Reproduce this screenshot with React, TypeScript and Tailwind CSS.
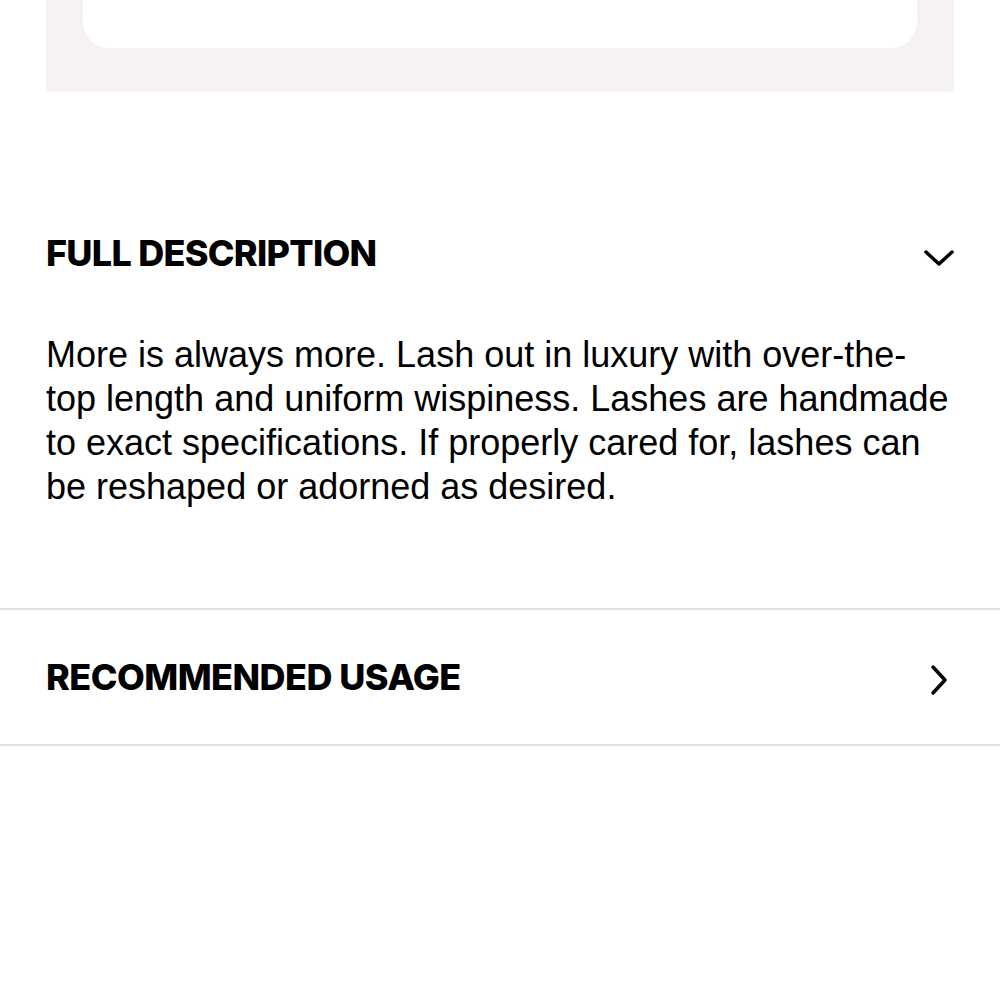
import React from 'react';

function ChevronDown() {
  return (
    <svg width="32" height="18" viewBox="0 0 32 18" fill="none" className="shrink-0">
      <path d="M3 3l13 12L29 3" stroke="black" strokeWidth="3.5" strokeLinecap="round" strokeLinejoin="round" />
    </svg>
  );
}

function ChevronRight() {
  return (
    <svg width="18" height="32" viewBox="0 0 18 32" fill="none" className="shrink-0">
      <path d="M3 3l12 13L3 29" stroke="black" strokeWidth="3.5" strokeLinecap="round" strokeLinejoin="round" />
    </svg>
  );
}

export default function App() {
  return (
    <div className="min-h-screen w-[1000px] bg-white text-black">
      {/* image panel tail */}
      <div className="mx-[46px] h-[92px] bg-[#f6f2f2] px-[37px]">
        <div className="h-[48px] rounded-b-[26px] bg-white" />
      </div>

      {/* full description */}
      <div className="px-[46px] pt-[143px]">
        <div className="flex items-center justify-between">
          <h2 className="font-['Inter',sans-serif] text-[36px] font-extrabold uppercase leading-none tracking-[-0.02em]">
            Full Description
          </h2>
          <div className="mr-[-1px] pt-[10px]">
            <ChevronDown />
          </div>
        </div>
        <p className="mt-[62px] whitespace-nowrap font-['Liberation_Sans',Arial,sans-serif] text-[36px] leading-[44px]">
          More is always more. Lash out in luxury with over-the-
          <br />
          top length and uniform wispiness. Lashes are handmade
          <br />
          to exact specifications. If properly cared for, lashes can
          <br />
          be reshaped or adorned as desired.
        </p>
      </div>

      {/* recommended usage */}
      <div className="mt-[99px] border-y-2 border-[#e0e0e0]">
        <div className="flex h-[134px] items-center justify-between px-[46px]">
          <h2 className="font-['Inter',sans-serif] text-[36px] font-extrabold uppercase leading-none tracking-[-0.015em]">
            Recommended Usage
          </h2>
          <div className="mr-[6px] pt-[6px]">
            <ChevronRight />
          </div>
        </div>
      </div>
    </div>
  );
}
